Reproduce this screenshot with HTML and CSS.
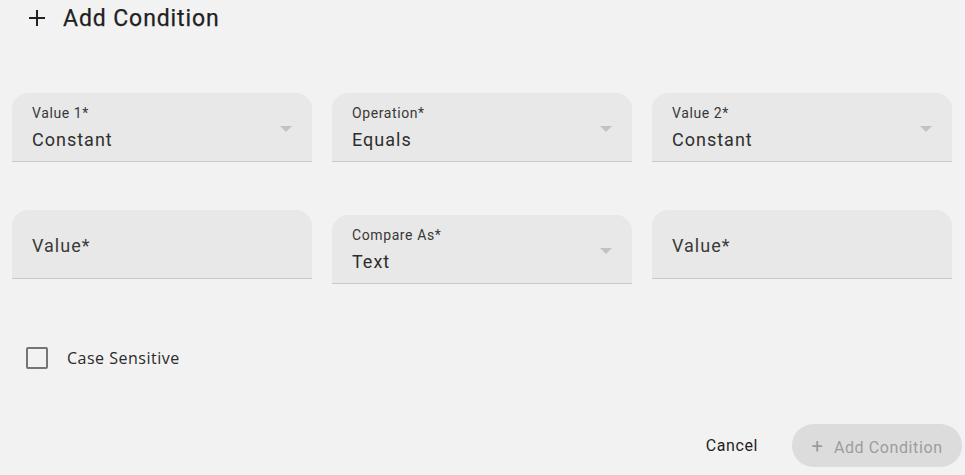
FILE: index.html
```html
<!DOCTYPE html>
<html lang="en">
<head>
    <meta charset="UTF-8">
    <title>Add Condition</title>
    <link rel="stylesheet" href="styles.css">
</head>
<body>
    <div class="dialog">
        <h1 class="title">
            <svg class="plus" width="18" height="18" viewBox="0 0 18 18"><path d="M9 1v16M1 9h16" stroke="#222" stroke-width="2"/></svg>
            Add Condition
        </h1>

        <div class="row">
            <div class="field select">
                <span class="label">Value 1*</span>
                <span class="value">Constant</span>
                <span class="arrow"></span>
            </div>
            <div class="field select">
                <span class="label">Operation*</span>
                <span class="value">Equals</span>
                <span class="arrow"></span>
            </div>
            <div class="field select">
                <span class="label">Value 2*</span>
                <span class="value">Constant</span>
                <span class="arrow"></span>
            </div>
        </div>

        <div class="row second">
            <div class="field text"><span class="placeholder">Value*</span></div>
            <div class="field select offset">
                <span class="label">Compare As*</span>
                <span class="value">Text</span>
                <span class="arrow"></span>
            </div>
            <div class="field text"><span class="placeholder">Value*</span></div>
        </div>

        <label class="check">
            <span class="box"></span>
            Case Sensitive
        </label>

        <div class="actions">
            <button class="cancel">Cancel</button>
            <button class="submit" disabled><span class="btn-plus">+</span> Add Condition</button>
        </div>
    </div>
</body>
</html>
```

FILE: styles.css
```css
body { margin: 0; background: #f2f2f2; font-family: Roboto, "Liberation Sans", sans-serif; color: #2b2b2b; }
.dialog { width: 965px; height: 475px; overflow: hidden; }
.title { margin: 0; height: 36px; display: flex; align-items: center; gap: 17px; padding-left: 28px; font-size: 23px; font-weight: 400; letter-spacing: 0.9px; color: #1f1f1f; -webkit-text-stroke: 0.25px #1f1f1f; }
.plus { flex: none; }
.row { display: grid; grid-template-columns: repeat(3, 300px); gap: 20px; padding: 0 12px; margin-top: 57px; align-items: start; }
.row.second { margin-top: 48px; }
.field { position: relative; background: #e8e8e8; border-radius: 16px 16px 0 0; border-bottom: 1px solid #c9c9c9; padding: 0 20px; box-sizing: border-box; height: 69px; }
.select { display: flex; flex-direction: column; padding-top: 11px; }
.offset { margin-top: 5px; }
.label { font-size: 14px; line-height: 18px; color: #383838; letter-spacing: 0.6px; }
.value { font-size: 18px; line-height: 24px; margin-top: 6px; letter-spacing: 1px; color: #2e2e2e; }
.arrow { position: absolute; right: 20px; top: 33px; width: 0; height: 0; border-left: 6px solid transparent; border-right: 6px solid transparent; border-top: 6px solid #c2c2c2; }
.text { display: flex; align-items: center; }
.placeholder { font-size: 18px; letter-spacing: 1px; color: #3a3a3a; margin-top: 3px; }
.check { display: flex; align-items: center; gap: 19px; margin: 63px 0 0 26px; font-family: "Open Sans", sans-serif; font-size: 16px; letter-spacing: 0.5px; color: #2a2a2a; }
.box { width: 18px; height: 18px; border: 2px solid #757575; border-radius: 2px; }
.actions { display: flex; justify-content: flex-end; align-items: center; gap: 34px; padding-right: 3px; margin-top: 55px; }
button { font-family: Roboto, "Liberation Sans", sans-serif; font-size: 16px; border: none; cursor: pointer; }
.cancel { background: none; color: #1e1e1e; font-weight: 400; padding: 0; letter-spacing: 0.6px; }
.submit { background: #dcdcdc; color: #9c9c9c; height: 43px; width: 170px; border-radius: 22px; font-weight: 400; letter-spacing: 0.6px; }
.btn-plus { font-size: 20px; font-weight: 400; margin-right: 6px; }
```
